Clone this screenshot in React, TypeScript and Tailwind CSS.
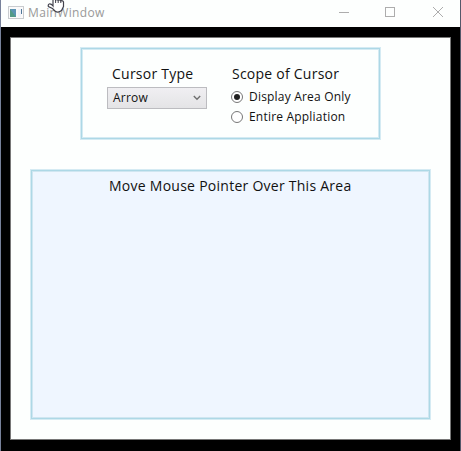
import React from "react";

function TitleBar() {
  return (
    <header className="relative flex h-[27px] shrink-0 items-center bg-[#fdfffe] pl-[7px] text-[#999]">
      <svg width="16" height="13" viewBox="0 0 16 13" className="mb-[3px]">
        <rect x="0.5" y="0.5" width="15" height="12" fill="#fafafa" stroke="#c9cccf" />
        <rect x="2" y="3" width="6" height="8" fill="#5b94b4" />
        <path d="M2 3L8 11H2Z" fill="#529b86" />
        <rect x="10" y="3" width="3" height="8" fill="#f1f3fa" />
        <rect x="13" y="3" width="1" height="5" fill="#4e7898" />
      </svg>
      <span className="mb-[2px] ml-[4px] w-[78px] whitespace-nowrap text-[12px] leading-4 tracking-[0.35px]">MainWindow</span>
      <svg width="106" height="12" viewBox="0 0 106 12" className="mb-[3px] ml-[233px] shrink-0" fill="none" stroke="#adadad">
        <path d="M0 6.5H10" />
        <rect x="46.5" y="1.5" width="9" height="9" />
        <path d="M94 1L104 11M104 1L94 11" />
      </svg>
      <svg width="20" height="22" viewBox="0 0 20 22" className="absolute left-[46px] top-[-9px]">
        <path
          d="M6 14V3.5Q6 2 7.3 2T8.6 3.5V9Q9.8 8 11.2 9.3Q12.5 8.3 13.8 9.8Q16 9.3 16.5 11V15.5L14.5 19.5Q11 22.5 8 20L5.5 17.5L1.4 15.5Q0.8 13.5 2.2 13Q4 12.5 6 15Z"
          fill="#fff"
          stroke="#42424c"
          strokeWidth="1.2"
        />
        <path d="M8.6 9V12M11.2 9.5V12M13.8 10V12" stroke="#42424c" />
      </svg>
    </header>
  );
}

function Radio({ label, checked }: { label: string; checked?: boolean }) {
  return (
    <label className="flex h-5 items-center">
      <span className="flex h-[12px] w-[12px] shrink-0 items-center justify-center rounded-full border border-[#777] bg-white">
        {checked && <span className="h-[6px] w-[6px] rounded-full bg-[#202020]" />}
      </span>
      <span className="ml-[6px] whitespace-nowrap text-[12px] leading-5 tracking-[0.2px]">{label}</span>
    </label>
  );
}

export default function App() {
  return (
    <div className="flex h-[451px] w-[461px] flex-col overflow-hidden border-x border-l-[#77819a] border-r-[#55586a] bg-black font-['Open_Sans','Noto_Sans',sans-serif] text-[#111]">
      <TitleBar />
      <main className="ml-[9px] mt-[10px] flex h-[403px] w-[441px] flex-col border border-[#777] bg-[#fdfffe]">
        <section className="ml-[69px] mt-[9px] flex h-[93px] w-[301px] shrink-0 border border-[#d5ebf3] shadow-[inset_0_0_0_1px_#add8e6,inset_0_0_0_2px_#d5ebf3]">
          <div className="ml-[26px] mt-[16px] w-[100px]">
            <h2 className="ml-[5px] whitespace-nowrap text-[14px] leading-5 tracking-[0.24px]">Cursor Type</h2>
            <button className="mt-[3px] flex h-[22px] w-[100px] items-center justify-between border border-[#bcbcc0] bg-linear-to-b from-[#f0eff2] to-[#e4e4e6] pl-[5px] pr-[5px] text-[12px] tracking-[0.2px]">
              <span>Arrow</span>
              <svg width="8" height="6" viewBox="0 0 8 6" fill="none" stroke="#707070" strokeWidth="1.4">
                <path d="M0.8 1L4 4.2L7.2 1" />
              </svg>
            </button>
          </div>
          <div className="ml-[24px] mt-[16px]">
            <h2 className="ml-[1px] whitespace-nowrap text-[14px] leading-5 tracking-[0.24px]">Scope of Cursor</h2>
            <div className="mt-[3px]">
              <Radio label="Display Area Only" checked />
              <Radio label="Entire Appliation" />
            </div>
          </div>
        </section>
        <section className="ml-[19px] mt-[29px] h-[251px] w-[401px] shrink-0 border border-[#d5ebf3] bg-[#eff6ff] shadow-[inset_0_0_0_1px_#add8e6,inset_0_0_0_2px_#d0e6f1]">
          <p className="ml-[78px] mt-[6px] whitespace-nowrap text-[14px] leading-5 tracking-[0.26px]">Move Mouse Pointer Over This Area</p>
        </section>
      </main>
    </div>
  );
}
